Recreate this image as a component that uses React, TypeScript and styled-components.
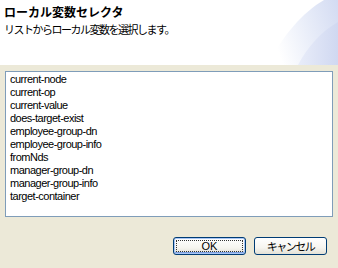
import React from "react";
import styled, { createGlobalStyle } from "styled-components";

const GlobalStyle = createGlobalStyle`
  html, body {
    margin: 0;
    padding: 0;
    background: #ece9d8;
  }
`;

const Dialog = styled.div`
  width: 338px;
  height: 268px;
  background: #ece9d8;
  display: flex;
  flex-direction: column;
  font-family: "Liberation Sans", "Noto Sans CJK JP", sans-serif;
  overflow: hidden;
`;

const Header = styled.div`
  position: relative;
  height: 65px;
  background: #ffffff;
  padding: 4px 0 0 4px;
  box-sizing: border-box;
  overflow: hidden;
`;

const Swoosh = styled.svg`
  position: absolute;
  right: 0;
  top: 0;
`;

const Title = styled.div`
  position: relative;
  font-family: "Noto Sans CJK JP", sans-serif;
  font-weight: bold;
  font-size: 12px;
  line-height: 16px;
  color: #000;
`;

const Subtitle = styled.div`
  position: relative;
  font-family: "Noto Sans CJK JP", sans-serif;
  font-size: 11px;
  line-height: 16px;
  letter-spacing: -1.5px;
  color: #000;
  margin-top: 1px;
`;

const ListBox = styled.ul`
  list-style: none;
  margin: 6px 5px 0 5px;
  padding: 1px 0 0 4px;
  height: 146px;
  box-sizing: border-box;
  background: #ffffff;
  border: 1px solid #7f9db9;
  overflow: hidden;
`;

const ListItem = styled.li`
  font-family: "Liberation Sans", sans-serif;
  font-size: 11px;
  letter-spacing: -0.5px;
  line-height: 13px;
  height: 13px;
  color: #000;
  white-space: nowrap;
`;

const ButtonRow = styled.div`
  display: flex;
  justify-content: flex-end;
  gap: 8px;
  padding: 20px 11px 0 0;
`;

const Button = styled.button<{ $isDefault?: boolean }>`
  position: relative;
  width: 73px;
  height: 18px;
  padding: 0;
  border: 1px solid #003c74;
  border-radius: 3px;
  background: linear-gradient(#ffffff 0%, #f6f5f0 60%, #e3e1d6 100%);
  box-shadow: ${(p) =>
    p.$isDefault ? "inset 0 0 0 1px #a9c6f5, inset 0 -1px 0 1px #7b9fe0" : "none"};
  font-family: "Liberation Sans", "Noto Sans CJK JP", sans-serif;
  font-size: 11px;
  line-height: 16px;
  color: #000;
  display: flex;
  align-items: center;
  justify-content: center;

  &::after {
    content: "";
    display: ${(p) => (p.$isDefault ? "block" : "none")};
    position: absolute;
    inset: 2px;
    border: 1px dotted #333;
  }
`;

const JpLabel = styled.span`
  font-family: "Noto Sans CJK JP", sans-serif;
  letter-spacing: -1.5px;
`;

const variables = [
  "current-node",
  "current-op",
  "current-value",
  "does-target-exist",
  "employee-group-dn",
  "employee-group-info",
  "fromNds",
  "manager-group-dn",
  "manager-group-info",
  "target-container",
];

const App: React.FC = () => {
  return (
    <>
      <GlobalStyle />
      <Dialog>
        <Header>
          <Swoosh width="90" height="65" viewBox="0 0 90 65">
            <defs>
              <linearGradient id="sw1" x1="0" y1="0.3" x2="1" y2="0">
                <stop offset="0" stopColor="#ffffff" />
                <stop offset="0.55" stopColor="#e6ebf8" />
                <stop offset="1" stopColor="#d3dbf2" />
              </linearGradient>
              <linearGradient id="sw2" x1="0" y1="0" x2="1" y2="0">
                <stop offset="0" stopColor="#e9edf9" />
                <stop offset="1" stopColor="#d0d8f1" />
              </linearGradient>
            </defs>
            <path d="M20 65 C34 36 55 12 76 0 L90 0 L90 65 Z" fill="url(#sw1)" />
            <path d="M50 65 C60 46 74 31 90 22 L90 65 Z" fill="url(#sw2)" />
          </Swoosh>
          <Title>ローカル変数セレクタ</Title>
          <Subtitle>リストからローカル変数を選択します。</Subtitle>
        </Header>
        <ListBox>
          {variables.map((v) => (
            <ListItem key={v}>{v}</ListItem>
          ))}
        </ListBox>
        <ButtonRow>
          <Button $isDefault>OK</Button>
          <Button>
            <JpLabel>キャンセル</JpLabel>
          </Button>
        </ButtonRow>
      </Dialog>
    </>
  );
};

export default App;
